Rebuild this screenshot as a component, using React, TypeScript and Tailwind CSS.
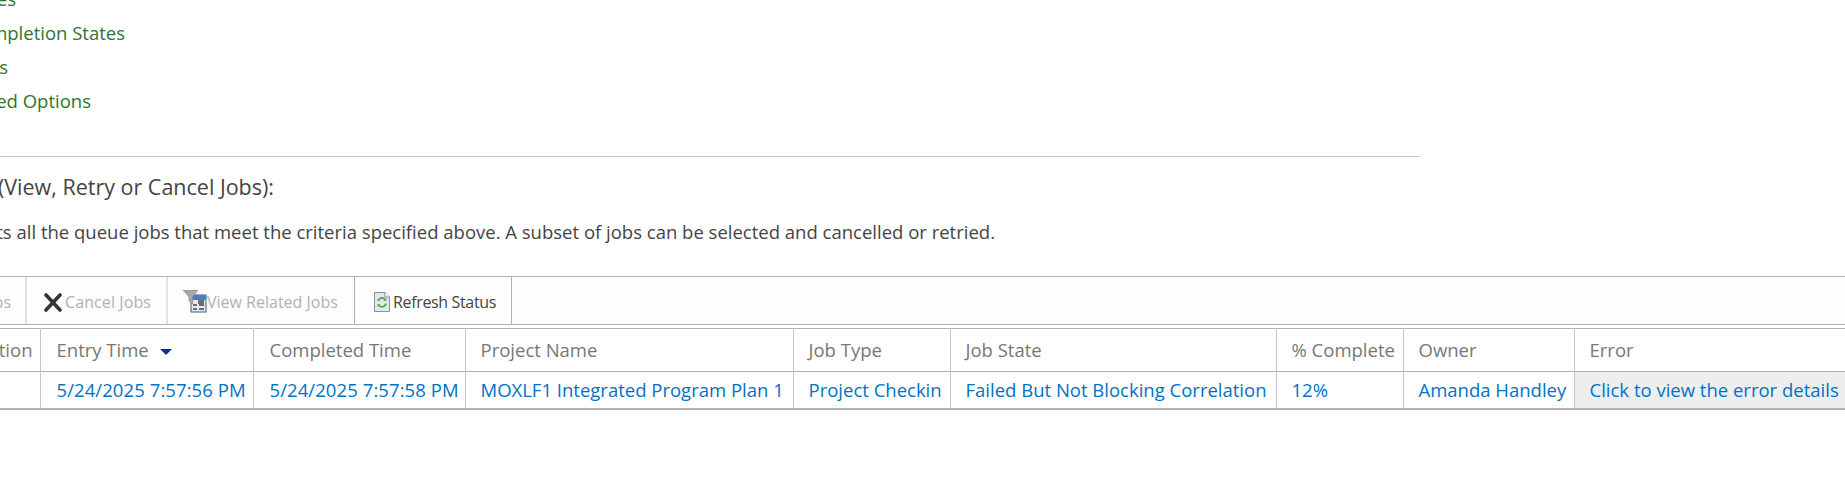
const font = "font-['Open_Sans','Liberation_Sans',sans-serif]";

function CancelIcon() {
  return (
    <svg width="20" height="20" viewBox="0 0 20 20" className="shrink-0">
      <path d="M3 3 L17 18 M17 3 L3 18" stroke="#333" strokeWidth="3.6" strokeLinecap="round" />
    </svg>
  );
}

function FilterGridIcon() {
  return (
    <svg width="24" height="24" viewBox="0 0 24 24" className="shrink-0">
      <rect x="8" y="5" width="15" height="17" fill="#e6e9ee" stroke="#3d5f8f" />
      <rect x="8" y="5" width="15" height="5" fill="#4a7fc4" />
      <path d="M15 11h6M15 13h6M10 15h4M16 15h5M10 19h4M16 19h5" stroke="#444" strokeWidth="1.4" />
      <path d="M0 0 H15 L9.5 7 V14 L6 11 V7 Z" fill="#a8a8a8" stroke="#8a8a8a" strokeWidth="0.7" />
    </svg>
  );
}

function RefreshIcon() {
  return (
    <svg width="18" height="22" viewBox="0 0 18 22" className="shrink-0">
      <path d="M1.5 1.5 H12 L16.5 6 V20.5 H1.5 Z" fill="#dfe8f2" stroke="#7f93a8" />
      <path d="M12 1.5 V6 H16.5" fill="#fff" stroke="#7f93a8" />
      <path d="M5 10 A4 4 0 0 1 12 8.5 M13 12.5 A4 4 0 0 1 6 14.5" fill="none" stroke="#5aa72c" strokeWidth="1.8" />
      <path d="M10.5 9.5 L13.5 10 L13.5 7 Z M7.5 13.5 L4.5 13 L4.5 16 Z" fill="#5aa72c" />
    </svg>
  );
}

function ToolButton({ children, className }: { children: React.ReactNode; className: string }) {
  return <div className={`flex items-center h-full pt-[2px] ${className}`}>{children}</div>;
}

const columns = [
  { label: "Position", value: "", width: 40, right: true },
  { label: "Entry Time", value: "5/24/2025 7:57:56 PM", width: 213, sort: true, date: true },
  { label: "Completed Time", value: "5/24/2025 7:57:58 PM", width: 212, date: true },
  { label: "Project Name", value: "MOXLF1 Integrated Program Plan 1", width: 328 },
  { label: "Job Type", value: "Project Checkin", width: 157 },
  { label: "Job State", value: "Failed But Not Blocking Correlation", width: 326 },
  { label: "% Complete", value: "12%", width: 127 },
  { label: "Owner", value: "Amanda Handley", width: 171 },
  { label: "Error", value: "Click to view the error details", width: 320, error: true },
];

function GreenLink({ text, width }: { text: string; width: number }) {
  return (
    <div className="h-[34px] flex items-center justify-end whitespace-nowrap" style={{ width }}>
      <span>{text}</span>
    </div>
  );
}

export default function App() {
  return (
    <div className={`${font} w-[1845px] h-[479px] overflow-hidden bg-white text-[#444] text-[18.5px]`}>
      <div className="-mt-[18px] text-[#31752f]">
        <GreenLink text="Job States" width={16} />
        <GreenLink text="Job Completion States" width={125} />
        <GreenLink text="Projects" width={8} />
        <GreenLink text="Advanced Options" width={91} />
      </div>
      <div className="mt-[38px] w-[1420px] h-px bg-[#c6c6c6]" />
      <div className="mt-[17px] w-[274px] flex justify-end whitespace-nowrap text-[21.5px] leading-[26px] text-[#444]">
        <span>Jobs Grid (View, Retry or Cancel Jobs):</span>
      </div>
      <div className="mt-[21px] w-[995px] flex justify-end whitespace-nowrap text-[18.5px] leading-[22px] text-[#444]">
        <span>The Jobs Grid lists all the queue jobs that meet the criteria specified above. A subset of jobs can be selected and cancelled or retried.</span>
      </div>
      <div className="mt-[33px] h-[49px] border-y border-[#b1b1b1] bg-[#fdfdfd] flex text-[16px] whitespace-nowrap">
        <ToolButton className="w-[27px] justify-end pr-[14px] border-r-2 border-[#e1e1e1] text-[#b1b1b1]">
          <span>Retry Jobs</span>
        </ToolButton>
        <ToolButton className="w-[141px] pl-[16px] border-r-2 border-[#e1e1e1] text-[#b1b1b1]">
          <CancelIcon />
          <span className="ml-[2px] tracking-[0.1px]">Cancel Jobs</span>
        </ToolButton>
        <ToolButton className="w-[187px] pl-[15px] border-r border-[#b1b1b1] text-[#b1b1b1]">
          <FilterGridIcon />
          <span>View Related Jobs</span>
        </ToolButton>
        <ToolButton className="w-[157px] pl-[18px] border-r border-[#b1b1b1] text-[#444]">
          <RefreshIcon />
          <span className="ml-[2px] tracking-[-0.35px]">Refresh Status</span>
        </ToolButton>
      </div>
      <table className="mt-[3px] table-fixed border-collapse w-[1894px] border-t border-b-2 border-[#b1b1b1] whitespace-nowrap">
        <colgroup>
          {columns.map((c) => (
            <col key={c.label} style={{ width: c.width }} />
          ))}
        </colgroup>
        <thead>
          <tr className="h-[43px] border-b border-[#b1b1b1]">
            {columns.map((c) => (
              <th
                key={c.label}
                className={`font-normal text-[#777] text-[18.5px] border-r border-[#c6c6c6] ${
                  c.right ? "text-right pr-[7px]" : c.date ? "text-left pl-[16px]" : "text-left pl-[15px]"
                } overflow-visible`}
              >
                {c.right ? <div className="flex justify-end">{c.label}</div> : c.label}
                {c.sort && (
                  <svg width="12" height="6" viewBox="0 0 12 6" className="inline-block ml-[11px] align-middle">
                    <path d="M0 0 H12 L6 6 Z" fill="#00309c" />
                  </svg>
                )}
              </th>
            ))}
          </tr>
        </thead>
        <tbody>
          <tr className="h-[37px]">
            {columns.map((c) => (
              <td
                key={c.label}
                className={`text-[#0072c6] text-[18.5px] border-r border-[#c6c6c6] ${
                  c.date ? "pl-[16px] tracking-[0.08px]" : "pl-[15px]"
                } ${c.error ? "bg-[#eeeeee]" : ""}`}
              >
                {c.value}
              </td>
            ))}
          </tr>
        </tbody>
      </table>
    </div>
  );
}
